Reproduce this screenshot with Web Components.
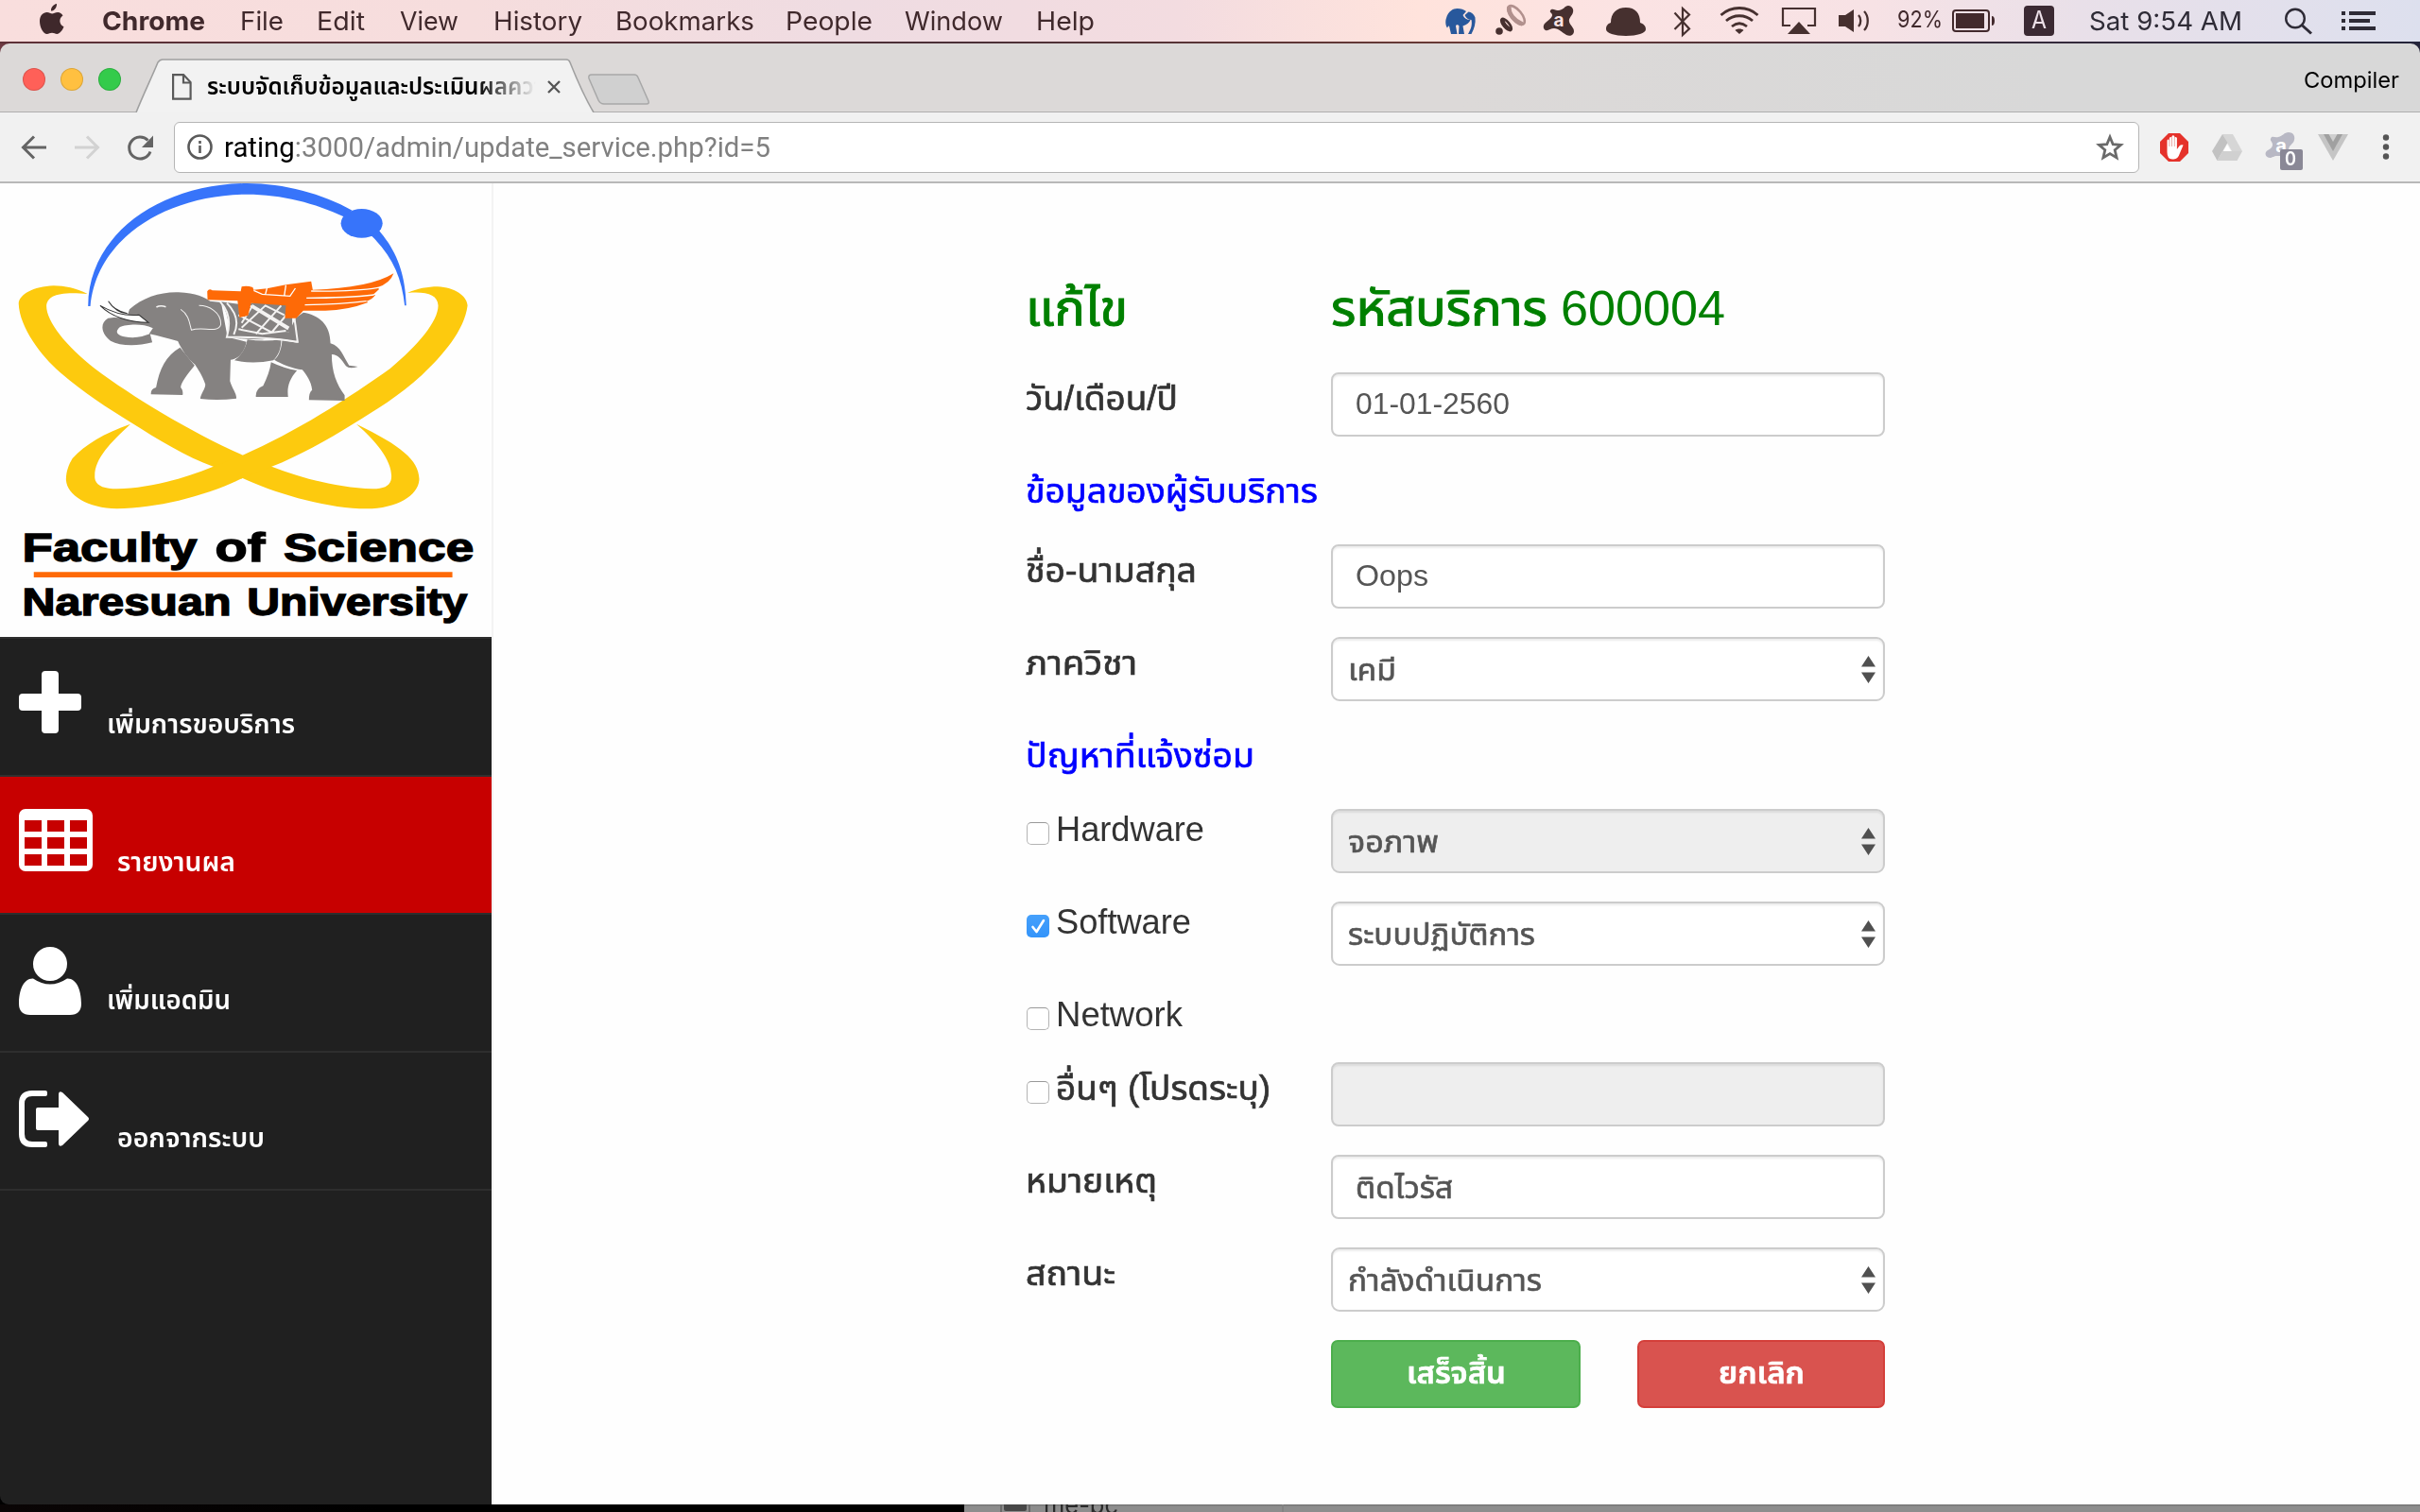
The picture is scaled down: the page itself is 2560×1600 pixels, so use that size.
<!DOCTYPE html>
<html lang="th">
<head>
<meta charset="utf-8">
<title>ระบบจัดเก็บข้อมูลและประเมินผลความพึงพอใจ</title>
<style>
html,body{margin:0;padding:0;width:2560px;height:1600px;overflow:hidden;background:#000}
body{font-family:"Liberation Sans","Noto Sans Thai",sans-serif}
</style>
</head>
<body>
<desk-top></desk-top>
<script>
/* Base class: puts markup and styles in an open shadow root */
const define = (name, css, html, ready) => customElements.define(name, class extends HTMLElement {
  connectedCallback() {
    if (this.shadowRoot) return;
    const root = this.attachShadow({mode: 'open'});
    const body = typeof html === 'function' ? html(this) : html;
    root.innerHTML = `<style>*{box-sizing:border-box}:host{display:block;box-sizing:border-box}svg{display:block}${css}</style>${body}`;
    if (ready) ready(this, root);
  }
});

/* One line of text: s = font size, b = baseline distance from the top, w = width in px */
define('line-text', `
  :host{flex:none;white-space:nowrap}
  span{display:inline-block;transform-origin:0 50%;white-space:pre}`,
  `<span><slot></slot></span>`,
  (el, root) => {
    const s = +el.getAttribute('s'), b = +el.getAttribute('b'), w = +el.getAttribute('w');
    const k = el.hasAttribute('ui') ? 0.3638 : 0.3465;
    if (el.hasAttribute('ui')) el.style.fontFamily = 'Inter, "Liberation Sans", sans-serif';
    else if (s > 30 && /[\u0e00-\u0e7f]/.test(el.textContent)) el.style.webkitTextStroke = s / 50 + 'px currentColor';
    el.style.fontSize = s + 'px';
    el.style.lineHeight = 2 * (b - k * s) + 'px';
    el.style.height = 2 * (b - k * s) + 'px';
    el.style.width = w + 'px';
    const span = root.querySelector('span');
    const n = span.getBoundingClientRect().width;
    if (n) span.style.transform = `scaleX(${w / n})`;
  });

/* ---------- macOS menu bar ---------- */
define('menu-bar', `
  :host{height:44px;display:flex;align-items:flex-start;color:#40292c;
    background:linear-gradient(90deg,#f9dedd 0,#f6dddd 500px,#efdce2 900px,#f3dce0 1250px,#ffe3dc 1500px,#fbe3e3 1720px,#f7e2e5 1980px,#e9e0e9 2200px,#dde0ee 2560px)}
  svg,line-text{flex:none}
  .r{color:#2e2b36}`, `
  <svg style="margin-left:42px" width="26" height="44" viewBox="0 0 26 44" fill="#3f282b"><path d="M18 4c.3 4-2.600 7.500-6 7.600C11.600 8 14.500 4.600 18 4zM24.500 16.500c-4.600 3-4 9.500 1 11.800C24 32.300 21 36 18.300 36c-2 0-3-1.200-5.300-1.200S9.700 36 7.800 36C3.500 36 0 28.500 0 22.500c0-6 3.600-9.500 7.700-9.500 2.200 0 4 1.400 5.500 1.400 1.400 0 3.400-1.500 6-1.500 2.100 0 4.100 1.200 5.300 3.600z"/></svg>
  <line-text ui s="27.5" b="32.5" w="109" style="margin-left:40px;font-weight:700">Chrome</line-text>
  <line-text ui s="27.5" b="32.5" w="46" style="margin-left:37px">File</line-text>
  <line-text ui s="27.5" b="32.5" w="51" style="margin-left:35px">Edit</line-text>
  <line-text ui s="27.5" b="32.5" w="62" style="margin-left:37px">View</line-text>
  <line-text ui s="27.5" b="32.5" w="94" style="margin-left:37px">History</line-text>
  <line-text ui s="27.5" b="32.5" w="147" style="margin-left:35px">Bookmarks</line-text>
  <line-text ui s="27.5" b="32.5" w="92" style="margin-left:33px">People</line-text>
  <line-text ui s="27.5" b="32.5" w="104" style="margin-left:34px">Window</line-text>
  <line-text ui s="27.5" b="32.5" w="62" style="margin-left:35px">Help</line-text>
  <svg style="margin-left:371px" width="490" height="44" viewBox="0 0 490 44" fill="#46302f" stroke="none">
    <g fill="#28589c"><path d="M6 36L4 27.500C3 27 2.500 29 2 29.500 0 27-.2 22 1 19 3 12 8 9 12.500 9c4 0 7 1 9.500 3l-3.500 4c1.500 3.500 4 5 8 5-1 3-3.500 5-8 6.500L20 36h-6l.5-8.500c-1-1.800-3-1.800-3.500 0L12.500 36z"/><path d="M20.500 16l4-3.500c3 0 5.500 2.500 7 6 .8 6-1 12-4 17.500H24c3.500-6 4.500-10 3.500-15-3 0-5.500-1.500-7-5z"/></g>
    <circle cx="57" cy="33" r="3.800"/>
    <ellipse cx="64.500" cy="26" rx="3" ry="7.500" transform="rotate(-40 64.500 26)" fill="none" stroke="#46302f" stroke-width="2.600"/><path d="M61 20c0 4 3 8 8 11" fill="none" stroke="#46302f" stroke-width="3"/>
    <g fill="none" stroke="#b1908d"><ellipse cx="75" cy="16" rx="5.500" ry="12" transform="rotate(-40 75 16)" stroke-width="2.600"/><path d="M67.500 7c-1 7 5 15 14 18.500" stroke-width="4.500"/></g>
    <path d="M111 11c2-3 5 0 9 0 6-1 6-5 10-5 4 0 6 4 5 7-1 4-5 6-4 10 1 4 5 6 5 10 0 4-4 6-8 4-5-3-8-7-13-7-4 0-6 3-9 2-3-1-3-6 0-8 3-3 7-5 7-8s-3-2-2-5z"/>
    <text x="120" y="28" font-family="Inter,sans-serif" font-weight="700" font-size="19" text-anchor="middle" fill="#f9e3e2">a</text>
    <path d="M175 24C175 14 181 8 191 8s15 6 15 16c3 1 6 3 6 7 0 4-9 7-21 7s-21-3-21-7c0-4 2-6 5-7z"/>
    <path d="M242.500 13.500L258 30.500l-7 6.500V9l7 6.500L242.500 31" fill="none" stroke="#46302f" stroke-width="2.200"/>
    <g fill="none" stroke="#46302f" stroke-width="2.800"><path d="M291.500 16c11-10 28-10 39 0"/><path d="M297 22c8-7 20-7 28 0"/><path d="M303 28c5-4 11-4 16 0"/></g><path d="M311 36l-4.500-4c2-2 7-2 9 0z"/>
    <path d="M365 27h-8V9h34v18h-8" fill="none" stroke="#46302f" stroke-width="2.200"/><path d="M374 23l12 13h-24z"/>
    <path d="M416 16h7l9-6v24l-9-6h-7z"/><path d="M437 16c3 3 3 9 0 12M443 12c5 5 5 15 0 20" fill="none" stroke="#46302f" stroke-width="2.300"/>
  </svg>
  <line-text ui s="24" b="30" w="48" style="margin-left:-12px">92%</line-text>
  <svg style="margin-left:10px" width="46" height="44" viewBox="0 0 46 44" fill="#42292c"><rect x="1" y="11" width="38" height="22" rx="3" fill="none" stroke="#42292c" stroke-width="2"/><rect x="4" y="14" width="30" height="16"/><path d="M42 17q3 0 3 5t-3 5z"/></svg>
  <div style="flex:none;margin:6px 0 0 30px;width:32px;height:32px;border-radius:4px;background:#3b2a33;color:#ece0e8;display:flex;padding-left:8px"><line-text ui s="25" b="25" w="16">A</line-text></div>
  <line-text class="r" ui s="27.5" b="32.5" w="162" style="margin-left:37px">Sat 9:54 AM</line-text>
  <svg style="margin-left:45px" width="30" height="44" viewBox="0 0 30 44" fill="none" stroke="#2e2b36" stroke-width="2.400"><circle cx="11" cy="19.500" r="9.800"/><path d="M18 26.500l10 9" stroke-width="3"/></svg>
  <svg style="margin-left:30px" width="36" height="44" viewBox="0 0 36 44" fill="#2e2b36"><path d="M0 12h4v4H0zM8 12h28v4H8zM0 20h4v4H0zM8 20h22v4H8zM0 28h4v4H0zM8 28h28v4H8z"/></svg>`);

/* ---------- Chrome tab strip ---------- */
define('tab-strip', `
  :host{height:73px;display:grid;background:linear-gradient(90deg,#dcd9d8,#dcd9d8 60%,#d8d8d8 85%);border-radius:10px 10px 0 0}
  .bg,.row{grid-area:1/1}
  .row{display:flex;align-items:flex-start;z-index:1}
  .fade{overflow:hidden;width:348px;height:73px;-webkit-mask-image:linear-gradient(90deg,#000 82%,transparent 100%);mask-image:linear-gradient(90deg,#000 82%,transparent 100%);font-weight:600;color:#000}
  i{flex:none;width:24px;height:24px;border-radius:50%;margin-top:26px;box-shadow:inset 0 0 0 1px rgba(0,0,0,.14)}`, `
  <svg class="bg" width="2560" height="73" viewBox="0 0 2560 73">
    <path d="M0 73H144C152 53 160 37 167 20Q169 17 172 17H599Q602 17 603 20C611 40 619 58 628 73H2562V76H-2z" fill="#f2f2f2" stroke="#a0a0a0" stroke-width="1.600"/>
    <path d="M626 33h45q3 0 4 3l11 25q1 3-2 3h-45q-4 0-6-4l-10-23q-1-4 3-4z" fill="#d0d0d0" stroke="#a8a8a8" stroke-width="1.500"/>
  </svg>
  <div class="row">
    <i style="margin-left:24px;background:#ff6058"></i><i style="margin-left:16px;background:#ffc040"></i><i style="margin-left:16px;background:#34cb4b"></i>
    <svg style="margin:32px 0 0 54px" width="21" height="28" viewBox="0 0 21 28" fill="none" stroke="#5a5a5a" stroke-width="2.200"><path d="M1.100 1.100h11l7.500 8v17.500H1.100z"/><path d="M12 1v8.500h7.500"/></svg>
    <div class="fade" style="margin-left:16px"><line-text s="24" b="54" w="356">ระบบจัดเก็บข้อมูลและประเมินผลควา</line-text></div>
    <svg style="margin:39px 0 0 12px" width="14" height="14" viewBox="0 0 14 14" stroke="#555" stroke-width="2.300"><path d="M1 1l12 12M13 1L1 13"/></svg>
    <line-text ui s="23.500" b="48" w="101" style="margin-left:1844px;color:#000">Compiler</line-text>
  </div>`);

/* ---------- Chrome toolbar ---------- */
define('tool-bar', `
  :host{height:75px;display:flex;align-items:flex-start;background:#f1f1f1;border-bottom:2px solid #b8b8b8}
  svg{flex:none}
  .url{flex:none;margin:10px 0 0 14px;width:2079px;height:54px;border:1.500px solid #b5b5b5;border-radius:6px;background:#fff;display:flex;color:#808080}
  .url line-text{font-family:Roboto,"Liberation Sans",sans-serif}
  .badge{position:absolute;left:16px;top:18px;width:24px;height:22px;border-radius:2px;background:#8a8896;color:#fff;padding-left:5px}
  .av{position:relative;flex:none}`, `
  <svg style="margin:0 0 0 22px" width="148" height="73" viewBox="0 -.5 148 73" fill="none" stroke="#646464" stroke-width="3"><path d="M27 36.500H3M14 25L2.500 36.500 14 48"/><path d="M57 36.500h24M70 25l11.500 11.500L70 48" stroke="#d2d2d2"/><path d="M137 41a11.500 11.500 0 1 1-2.500-12"/><path d="M140 24v12.500h-12z" fill="#646464" stroke="none"/></svg>
  <div class="url">
    <svg style="margin:12px 0 0 13px" width="27" height="27" viewBox="0 0 27 27" fill="none" stroke="#5a5a5a" stroke-width="2.600"><circle cx="13.500" cy="13.500" r="12"/><path d="M13.500 12v8M13.500 7v3"/></svg>
    <line-text s="29" b="36.5" w="578" style="margin-left:12px"><span style="color:#000">rating</span>:3000/admin/update_service.php?id=5</line-text>
    <svg style="margin:11px 0 0 1402px" width="30" height="30" viewBox="0 0 30 30" fill="none" stroke="#6a6a6a" stroke-width="2.800"><path d="M15 4l3.200 7.700 8.300.7-6.300 5.400 1.900 8.100-7.100-4.300-7.100 4.300 1.900-8.100-6.300-5.400 8.300-.7z"/></svg>
  </div>
  <svg style="margin:22px 0 0 22px" width="30" height="30" viewBox="0 0 30 30"><path d="M9 0h12l9 9v12l-9 9H9l-9-9V9z" fill="#e5322b"/><path d="M7.500 17V7.500q1.200-1.800 2.400 0V5q1.300-2.200 2.600 0V3.200q1.400-2 2.800 0V5q1.300-1.800 2.600 0V17l2.500-3.500q2-2 4.200-1L21 21q-2 6.500-6.500 6.500H13q-5.500 0-5.500-7.500z" fill="#fff"/><path d="M9.900 7v7M12.500 5v9M15.300 5v9" stroke="#e5958f" stroke-width=".8"/></svg>
  <svg style="margin:23px 0 0 25px" width="32" height="28" viewBox="0 0 32 28"><path d="M11 0h11l10 18H21z" fill="#d6d6d6"/><path d="M11 0L0 18l5.500 10L16.500 9z" fill="#c2c2c2"/><path d="M5.500 28L11 18h21l-5.500 10z" fill="#d0d0d0"/><path d="M16 11l4 7h-8z" fill="#fff"/></svg>
  <div class="av" style="margin:21px 0 0 24px;width:40px;height:40px">
    <svg width="32" height="28" viewBox="0 0 32 28"><path d="M6 7c1-4 4-1 8-2 5-1 6-5 11-5 5 0 7 4 6 8-1 5-6 5-6 11v6H13c-4 0-5 2-8 2-5 0-6-6-2-8 3-2 5-3 5-6S5 9 6 7z" fill="#b8b8c4"/><text x="17" y="21" font-family="Inter,sans-serif" font-weight="700" font-size="20" text-anchor="middle" fill="#fff">a</text></svg>
    <div class="badge"><line-text ui s="20" b="18" w="12" style="font-weight:600">0</line-text></div>
  </div>
  <svg style="margin:23px 0 0 16px" width="32" height="28" viewBox="0 0 32 28"><path d="M0 0h32L16 28z" fill="#c5c5c5"/><path d="M6 0h20L16 18z" fill="#a0a0a0"/><path d="M11.500 0h9L16 8z" fill="#d0d0d0"/></svg>
  <svg style="margin:22px 0 0 36px" width="8" height="30" viewBox="0 0 8 30" fill="#555"><circle cx="4" cy="4.500" r="3.200"/><circle cx="4" cy="14.500" r="3.200"/><circle cx="4" cy="24.500" r="3.200"/></svg>`);

/* ---------- Faculty emblem ---------- */
define('faculty-logo', `:host{height:480px;background:#fefefe}`, `
  <svg width="520" height="480" viewBox="0 12 1556 1440" preserveAspectRatio="none">
    <g fill="#fdca0e">
      <path d="M277 363C240 345 205 337 170 337C105 339 60 366 59 394C62 470 130 560 190 612C270 680 340 725 413 770C500 825 590 880 675 911L768 948C880 1000 1040 1045 1160 1045C1260 1045 1327 1000 1327 950C1325 890 1270 845 1128 776C1190 830 1239 890 1239 940C1240 970 1220 982 1180 982C1070 978 960 950 860 911L768 875C600 800 420 690 300 600C210 530 147 450 147 402C150 370 180 355 277 363z"/>
      <path d="M1290 360C1320 346 1355 340 1385 340C1440 342 1478 370 1480 400C1470 480 1400 560 1336 620C1260 690 1190 730 1122 773C1030 830 945 878 860 911L768 948C650 1005 500 1043 370 1045C275 1043 209 1000 209 950C210 925 218 905 229 886C270 840 330 805 413 776C350 835 300 885 300 940C298 970 325 982 370 982C470 980 580 950 675 911L768 875C930 805 1110 690 1235 600C1325 525 1387 450 1387 400C1385 365 1350 355 1290 360z"/>
    </g>
    <g fill="#3774fa"><path d="M279 402C278 180 500 14 782 12C900 12 1020 45 1115 98L1088 118C1000 75 890 47 782 47C520 50 305 190 286 402z"/><ellipse cx="1145" cy="139" rx="66" ry="46"/><path d="M1198 160C1250 220 1283 290 1286 400H1281C1272 310 1240 240 1175 178z"/></g>
    <g fill="#858281">
      <path d="M410 412C450 375 510 356 565 358C620 360 650 375 665 386L700 390L720 500L780 515C775 545 755 570 730 572L728 640C735 665 750 680 748 695Q690 702 634 696C635 680 650 665 650 650C640 620 625 600 618 588C595 570 575 540 563 513C530 505 500 495 472 490L484 472C450 455 400 460 380 468C360 485 370 500 420 502C440 502 460 495 475 490L482 517C430 530 380 528 350 512C320 490 315 455 342 440C370 435 385 440 400 442z"/>
      <path d="M570 533L616 590C595 615 572 645 572 660C577 665 580 675 578 684L478 682Q476 665 494 660C505 600 525 560 570 533zM783 508Q835 515 890 508C890 540 880 560 865 574Q800 587 742 574Q775 550 783 508zM858 580Q900 600 940 606C915 635 908 660 912 690L810 690Q808 665 833 655C845 630 855 605 858 580zM960 422C1010 430 1046 460 1046 520C1080 530 1085 560 1105 590L1133 594Q1105 602 1095 592C1080 570 1070 555 1050 555C1050 610 1065 650 1091 685V702L978 700Q978 675 988 668C985 640 970 620 957 604C925 600 890 585 868 572C885 560 892 530 893 510L942 518L935 440z"/>
      <path d="M700 388L755 395L760 470L915 485L935 440L942 516Q880 498 830 508Q780 508 716 500Q735 450 700 388z"/>
      <path d="M755 392H925V485H755z"/>
    </g>
    <g fill="none" stroke="#f4f3f2" stroke-width="6"><path d="M697 388Q738 430 718 500Q840 500 942 515L932 440M718 392Q765 440 740 492"/><path d="M765 455L800 400L915 470M755 430L860 485L915 420M790 400L912 475M765 470L840 400L900 430M810 490L890 400M755 475L830 490L905 480"/><path d="M572 412C600 430 600 460 606 478C640 465 690 490 699 460C700 420 660 400 630 400" stroke-width="3"/><path d="M495 405Q508 398 525 404" stroke-width="5"/></g>
    <path d="M317 400Q380 436 440 430L470 454Q370 452 317 400zM343 386Q360 415 403 425Q370 425 343 386z" fill="#fff" stroke="#333" stroke-width="3"/>
    <g fill="#fe6a07"><path d="M656 355Q662 345 672 352L762 355L765 340Q780 335 800 342L803 350L845 346L905 334L985 323L990 350Q1170 345 1246 298Q1235 330 1195 342L1200 348Q1190 358 1180 366H1188Q1180 380 1160 386L1165 390Q1100 415 1030 416H960L938 440H902L905 400L795 392L785 432L758 438L752 385L657 382z"/></g>
    <g fill="none" stroke="#fefefe" stroke-width="4"><path d="M985 354Q1120 356 1197 343M970 376Q1100 376 1184 366M965 398Q1080 396 1160 386M845 345L840 365M905 335L900 368M803 352L830 364L918 370L935 345"/></g>
    <g font-family="Liberation Sans,Arial,sans-serif" font-weight="700" fill="#000" stroke="#000" stroke-width="4">
      <text x="70" y="1213" font-size="126" textLength="554" lengthAdjust="spacingAndGlyphs">Faculty</text>
      <text x="681" y="1213" font-size="126" textLength="158" lengthAdjust="spacingAndGlyphs">of</text>
      <text x="898" y="1213" font-size="126" textLength="602" lengthAdjust="spacingAndGlyphs">Science</text>
      <text x="70" y="1384" font-size="120" textLength="662" lengthAdjust="spacingAndGlyphs">Naresuan</text>
      <text x="782" y="1384" font-size="120" textLength="697" lengthAdjust="spacingAndGlyphs">University</text></g>
    <path d="M107 1246h1325v17H107z" fill="#fe6a07"/>
  </svg>`);

/* ---------- Sidebar ---------- */
define('nav-item', `
  :host{height:146px;border-top:2px solid #2e2e2e;background:#202020;color:#fff;display:flex;align-items:flex-start;padding-left:20px}
  :host([active]){background:#c70000;border-top-color:#303030}
  .icon{width:var(--w);flex:none}
  .t{font-weight:600}`,
  el => `<div class="icon" style="--w:${el.getAttribute('iw') - 2}px"><slot name="icon"></slot></div><line-text class="t" s="28" b="100.500" w="${+el.getAttribute('tw') + 3}">${el.getAttribute('label')}</line-text>`);

define('side-bar', `:host{width:522px;flex:none;background:linear-gradient(90deg,#202020 520px,#f3f3f3 520px)}
  faculty-logo,nav-item{width:520px}
  svg{margin-top:34px;fill:#fff}
  nav-item:last-of-type{height:148px;border-bottom:2px solid #2e2e2e}`, `
  <faculty-logo></faculty-logo>
  <nav-item label="เพิ่มการขอบริการ" iw="95" tw="196"><svg slot="icon" width="66" height="66"><rect x="24" width="18" height="66" rx="4"/><rect y="24" width="66" height="18" rx="4"/></svg></nav-item>
  <nav-item active label="รายงานผล" iw="106" tw="122"><svg slot="icon" width="78" height="66" viewBox="0 0 78 66"><rect width="78" height="66" rx="7"/><path fill="#c70000" d="M6 12h18v12H6zM30 12h18v12H30zM54 12h18v12H54zM6 30h18v12H6zM30 30h18v12H30zM54 30h18v12H54zM6 48h18v12H6zM30 48h18v12H30zM54 48h18v12H54z"/></svg></nav-item>
  <nav-item label="เพิ่มแอดมิน" iw="95" tw="128"><svg slot="icon" width="66" height="72" viewBox="0 0 66 72"><circle cx="33" cy="18" r="18"/><path d="M15 33.500Q24 39.500 33 39.500T51 33.500C61 33 66 46 66 60Q66 72 54 72H12Q0 72 0 60C0 46 5 33 15 33.500z"/></svg></nav-item>
  <nav-item label="ออกจากระบบ" iw="106" tw="153"><svg slot="icon" style="margin-top:40px" width="75" height="60" viewBox="0 0 75 60"><path d="M28 0q2 0 2 2v2q0 2-2 2H14q-8 0-8 8v32q0 8 8 8h14q2 0 2 2v2q0 2-2 2H14Q0 60 0 46V14Q0 0 14 0z"/><path d="M20 18h22V4q0-4 4-2L73 28q2 2 0 4L46 58q-4 2-4-2V42H20q-2 0-2-2V20q0-2 2-2z"/></svg></nav-item>`);

/* ---------- Form ---------- */
define('text-field', `
  :host{width:586px;height:68px;flex:none;border:2px solid #ccc;border-radius:8px;background:#fff;box-shadow:inset 0 2px 2px rgba(0,0,0,.075);color:#555;display:flex;align-items:flex-start;padding-left:24px}
  :host([disabled]){background:#eee}`, `<slot></slot>`);
define('select-field', `
  :host{width:586px;height:68px;flex:none;border:2px solid #ccc;border-radius:9px;background:#fff;box-shadow:inset 0 2px 2px rgba(0,0,0,.075);color:#555;display:flex;justify-content:space-between;align-items:flex-start;padding:0 8px 0 16px}
  :host([disabled]){background:#eee}`, `<slot></slot><svg style="margin-top:18px" width="15" height="29" viewBox="0 0 15 29" fill="#505050"><path d="M7.500 0L15 11.500H0zM0 17.500h15L7.500 29z"/></svg>`);
define('check-box', `
  :host{flex:none;width:32px}
  div{width:24px;height:24px;border:1.5px solid #b4b4b4;border-top-color:#999;border-radius:5px;background:#fff}
  :host([checked]) div{border:0;background:linear-gradient(#45a0fb,#3394fa)}`,
  el => `<div>${el.hasAttribute('checked') ? '<svg width="24" height="24" viewBox="0 0 24 24" fill="none" stroke="#fff" stroke-width="2.600" stroke-linecap="round" stroke-linejoin="round"><path d="M6.500 13l4 5L18 6"/></svg>' : ''}</div>`);
define('form-row', `
  :host{height:98px;display:grid;grid-template-columns:322px 586px;align-items:start}
  .l,.f{display:flex;align-items:flex-start}.f{justify-content:space-between}`,
  `<div class="l"><slot name="label"></slot></div><div class="f"><slot></slot></div>`);
define('push-button', `
  :host{height:72px;border-radius:7px;border:2px solid #4cae4c;background:#5cb85c;color:#fff;display:flex;justify-content:center;align-items:flex-start;font-weight:600}
  :host([danger]){background:#d9534f;border-color:#d43f3a}`, `<slot></slot>`);

define('edit-form', `
  :host{flex:1;background:#fefefe;padding:98px 0 0 564px;color:#333}
  .head{height:102px;color:#008000}.sub{height:84px;color:#00f}
  line-text[slot]{margin-left:-1px}
  check-box{margin-top:14px}`, `
  <form-row class="head"><line-text slot="label" s="52" b="53" w="108">แก้ไข</line-text><div style="display:flex"><line-text s="52" b="53" w="229">รหัสบริการ</line-text><line-text s="52" b="53" w="174" style="margin-left:14px">600004</line-text></div></form-row>
  <form-row><line-text slot="label" s="36" b="40" w="161" style="margin-left:-1px">วัน/เดือน/ปี</line-text><text-field><line-text s="32" b="43" w="163">01-01-2560</line-text></text-field></form-row>
  <form-row class="sub"><line-text slot="label" s="36" b="40.5" w="309">ข้อมูลของผู้รับบริการ</line-text></form-row>
  <form-row><line-text slot="label" s="36" b="40.5" w="181">ชื่อ-นามสกุล</line-text><text-field><line-text s="32" b="43" w="77">Oops</line-text></text-field></form-row>
  <form-row><line-text slot="label" s="36" b="40.5" w="118">ภาควิชา</line-text><select-field><line-text s="32" b="45" w="51">เคมี</line-text></select-field></form-row>
  <form-row class="sub"><line-text slot="label" s="36" b="40.5" w="242">ปัญหาที่แจ้งซ่อม</line-text></form-row>
  <form-row><check-box slot="label"></check-box><line-text slot="label" s="36" b="34.5" w="157">Hardware</line-text><select-field disabled><line-text s="32" b="45" w="96">จอภาพ</line-text></select-field></form-row>
  <form-row><check-box slot="label" checked></check-box><line-text slot="label" s="36" b="34.5" w="143">Software</line-text><select-field><line-text s="32" b="45" w="198">ระบบปฏิบัติการ</line-text></select-field></form-row>
  <form-row style="height:72px"><check-box slot="label"></check-box><line-text slot="label" s="36" b="34.5" w="134">Network</line-text></form-row>
  <form-row><check-box slot="label" style="margin-top:20px"></check-box><line-text slot="label" s="36" b="40.5" w="227">อื่นๆ (โปรดระบุ)</line-text><text-field disabled></text-field></form-row>
  <form-row><line-text slot="label" s="36" b="40.5" w="139">หมายเหตุ</line-text><text-field><line-text s="32" b="45" w="103">ติดไวรัส</line-text></text-field></form-row>
  <form-row><line-text slot="label" s="36" b="40.5" w="95">สถานะ</line-text><select-field><line-text s="32" b="45" w="205">กำลังดำเนินการ</line-text></select-field></form-row>
  <form-row><push-button style="width:264px"><line-text s="32" b="45" w="105">เสร็จสิ้น</line-text></push-button><push-button danger style="width:262px"><line-text s="32" b="45" w="91">ยกเลิก</line-text></push-button></form-row>`);

/* Sliver of the windows behind the browser */
define('back-drop', `
  :host{height:8px;display:flex;overflow:hidden;background:linear-gradient(90deg,#0a0505,#000 400px)}
  .w{margin-left:1020px;width:1540px;height:8px;background:linear-gradient(#6a6a6a,#8d8d8d 2px);display:flex;overflow:hidden}
  .d{margin-left:38px;width:32px;height:8px;border:2px solid #6a6a6a;border-width:0 2px;padding:0 2px}.d div{height:7px;background:#474747;border-radius:0 0 2px 2px}
  .s{margin-left:173px;width:2px;background:#838383}
  line-text{margin:-18px 0 0 14px;color:#2a2a2a}`, `
  <div class="w"><div class="d"><div></div></div><line-text ui s="27" b="29" w="79">me-pc</line-text><div class="s"></div></div>`);

define('desk-top', `
  :host{width:2560px;height:1600px;overflow:hidden;display:flex;flex-direction:column;background:#000}
  menu-bar,tab-strip,tool-bar,back-drop{flex:none}
  .edge{height:2px;flex:none;background:linear-gradient(90deg,#5e3138,#4b2f36 40%,#6b3b36 62%,#3a2c3c 80%,#24243a)}
  .top{background:linear-gradient(90deg,#6d3a42,#3a2c3c 50%,#24243a);flex:none}
  .page{flex:none;height:1398px;display:flex;border-radius:0 0 0 9px;overflow:hidden}`, `
  <menu-bar></menu-bar><div class="edge"></div>
  <div class="top"><tab-strip></tab-strip></div>
  <tool-bar></tool-bar>
  <div class="page"><side-bar></side-bar><edit-form></edit-form></div>
  <back-drop></back-drop>`);
</script>
</body>
</html>
